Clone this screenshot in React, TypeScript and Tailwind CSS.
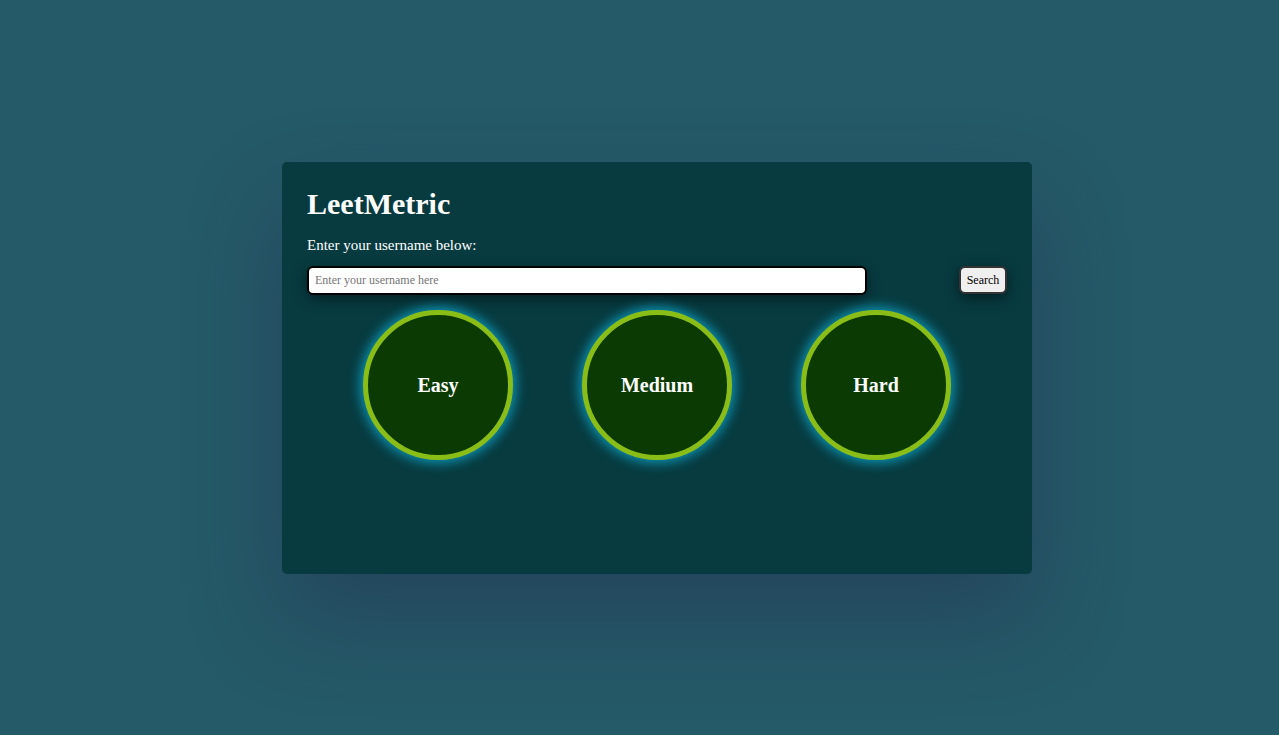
import React from "react";

export default function App() {
  const levels = ["Easy", "Medium", "Hard"];
  return (
    <div
      className="min-h-screen w-full bg-[#255a68] flex items-center"
      style={{ fontFamily: '"Liberation Serif", "Times New Roman", serif' }}
    >
      <div className="ml-[282px] w-[750px] h-[412px] bg-[#073b40] rounded-[5px] px-[25px] pt-[25px] shadow-[0_45px_90px_rgba(35,45,80,0.45)] flex flex-col">
        <h1 className="-mt-[2px] text-[30px] leading-[37px] font-bold text-white">LeetMetric</h1>
        <p className="mt-[14px] text-[15px] leading-[18px] text-white">Enter your username below:</p>
        <div className="mt-[12px] flex justify-between items-start">
          <input
            className="w-[560px] h-[29px] bg-white border-2 border-black rounded-[6px] px-[6px] text-[12px] text-black placeholder:text-[#757575] shadow-[0_4px_14px_rgba(0,0,0,0.45)] outline-none"
            style={{ fontFamily: '"Liberation Serif", "Times New Roman", serif' }}
            placeholder="Enter your username here"
          />
          <button
            className="w-[48px] h-[28px] bg-[#efefef] border-2 border-[#333] rounded-[6px] text-[12px] text-black shadow-[0_4px_14px_rgba(0,0,0,0.5)]"
            style={{ fontFamily: '"Liberation Serif", "Times New Roman", serif' }}
          >
            Search
          </button>
        </div>
        <div className="mt-[15px] flex justify-center gap-[69px]">
          {levels.map((l) => (
            <div
              key={l}
              className="w-[150px] h-[150px] rounded-full border-[5px] border-[#8abe17] bg-[#0b3b03] flex items-center justify-center shadow-[0_0_12px_3px_rgba(14,165,200,0.85)]"
            >
              <span className="text-[20px] font-bold text-white">{l}</span>
            </div>
          ))}
        </div>
      </div>
    </div>
  );
}
